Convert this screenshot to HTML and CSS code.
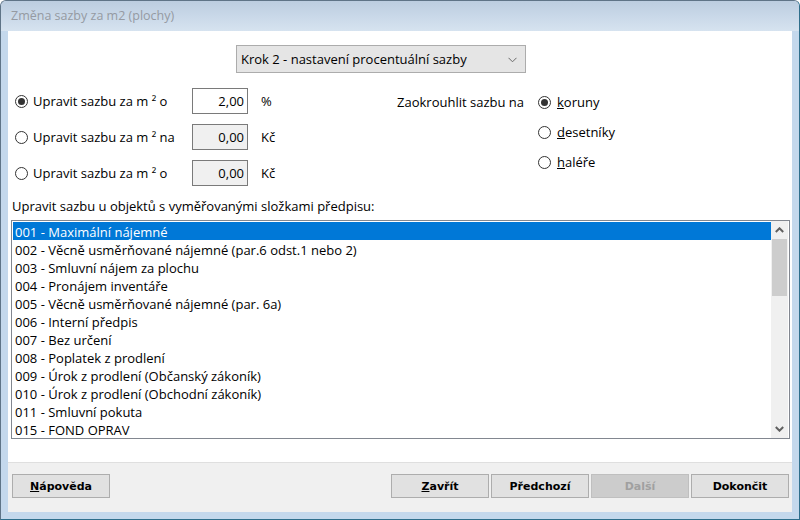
FILE: index.html
```html
<!DOCTYPE html>
<html lang="cs">
<head>
<meta charset="utf-8">
<title>Změna sazby za m2 (plochy)</title>
<link rel="stylesheet" href="styles.css">
</head>
<body>
<div class="window">
  <div class="titlebar"><span class="title">Změna sazby za m2 (plochy)</span></div>
  <div class="client">
    <div class="content">
      <div class="step-row">
        <div class="select">
          <span>Krok 2 - nastavení procentuální sazby</span>
          <svg class="chev" width="9" height="6" viewBox="0 0 9 6"><path d="M0.5 0.8 L4.5 4.8 L8.5 0.8" fill="none" stroke="#6a6a6a" stroke-width="1"/></svg>
        </div>
      </div>
      <div class="options">
        <div class="rates">
          <div class="rate-row">
            <span class="radio checked"></span>
            <span class="rate-label">Upravit sazbu za m ² o</span>
            <span class="field">2,00</span>
            <span class="unit">%</span>
          </div>
          <div class="rate-row">
            <span class="radio"></span>
            <span class="rate-label">Upravit sazbu za m ² na</span>
            <span class="field disabled">0,00</span>
            <span class="unit">Kč</span>
          </div>
          <div class="rate-row">
            <span class="radio"></span>
            <span class="rate-label">Upravit sazbu za m ² o</span>
            <span class="field disabled">0,00</span>
            <span class="unit">Kč</span>
          </div>
        </div>
        <div class="rounding">
          <span class="rounding-label">Zaokrouhlit sazbu na</span>
          <div class="rounding-list">
            <div class="opt"><span class="radio checked"></span><span><u>k</u>oruny</span></div>
            <div class="opt"><span class="radio"></span><span><u>d</u>esetníky</span></div>
            <div class="opt"><span class="radio"></span><span><u>h</u>aléře</span></div>
          </div>
        </div>
      </div>
      <div class="list-label">Upravit sazbu u objektů s vyměřovanými složkami předpisu:</div>
      <div class="listbox">
        <ul class="items">
          <li class="selected">001 - Maximální nájemné</li>
          <li>002 - Věcně usměrňované nájemné (par.6 odst.1 nebo 2)</li>
          <li>003 - Smluvní nájem za plochu</li>
          <li>004 - Pronájem inventáře</li>
          <li>005 - Věcně usměrňované nájemné (par. 6a)</li>
          <li>006 - Interní předpis</li>
          <li>007 - Bez určení</li>
          <li>008 - Poplatek z prodlení</li>
          <li>009 - Úrok z prodlení (Občanský zákoník)</li>
          <li>010 - Úrok z prodlení (Obchodní zákoník)</li>
          <li>011 - Smluvní pokuta</li>
          <li>015 - FOND OPRAV</li>
        </ul>
        <div class="scrollbar">
          <div class="sb-btn"><svg width="9" height="6" viewBox="0 0 9 6"><path d="M0.8 5 L4.5 1.3 L8.2 5" fill="none" stroke="#606060" stroke-width="2"/></svg></div>
          <div class="sb-track"><div class="sb-thumb"></div></div>
          <div class="sb-btn"><svg width="9" height="6" viewBox="0 0 9 6"><path d="M0.8 1 L4.5 4.7 L8.2 1" fill="none" stroke="#606060" stroke-width="2"/></svg></div>
        </div>
      </div>
    </div>
    <div class="footer">
      <button class="btn"><u>N</u>ápověda</button>
      <div class="spacer"></div>
      <div class="btn-group">
        <button class="btn"><u>Z</u>avřít</button>
        <button class="btn">Předchozí</button>
        <button class="btn disabled">Další</button>
        <button class="btn">Dokončit</button>
      </div>
    </div>
  </div>
</div>
</body>
</html>
```
FILE: styles.css
```css
html, body {
  margin: 0;
  padding: 0;
  background: #ffffff;
}

.window {
  box-sizing: border-box;
  width: 800px;
  height: 520px;
  display: flex;
  flex-direction: column;
  border: 1px solid #5f7487;
  border-right-color: #2f6f8c;
  border-bottom-color: #2f6f8c;
  border-radius: 6px 6px 0 0;
  background: #c4d8ec;
  padding: 0 7px 7px 7px;
  font-family: "Open Sans", "Liberation Sans", sans-serif;
  font-size: 13px;
  color: #000000;
}

.titlebar {
  height: 30px;
  margin: 0 -7px;
  padding-left: 10px;
  display: flex;
  align-items: center;
  background: linear-gradient(#bccde0, #d6e3f0);
  border-radius: 5px 5px 0 0;
}

.title {
  font-size: 12.5px;
  color: #959aa2;
  margin-top: -2px;
}

.client {
  flex: 1;
  display: flex;
  flex-direction: column;
  background: #ffffff;
}

.content {
  flex: 1;
  padding: 14px 2px 0 3px;
}

.step-row {
  display: flex;
  padding-left: 225px;
}

.select {
  box-sizing: border-box;
  width: 290px;
  height: 28px;
  display: flex;
  align-items: center;
  justify-content: space-between;
  padding: 0 8px 0 4px;
  background: #e5e5e5;
  border: 1px solid #acacac;
}

.chev {
  margin-top: 1px;
}

.options {
  display: flex;
  align-items: flex-start;
  margin-top: 10px;
}

.rates {
  width: 386px;
}

.rate-row {
  height: 36px;
  display: flex;
  align-items: center;
  padding-left: 4px;
}

.radio {
  box-sizing: border-box;
  width: 13px;
  height: 13px;
  border: 1px solid #333333;
  border-radius: 50%;
  background: #ffffff;
  display: flex;
  align-items: center;
  justify-content: center;
  flex: none;
}

.radio.checked::after {
  content: "";
  width: 7px;
  height: 7px;
  border-radius: 50%;
  background: #333333;
}

.rate-label {
  width: 159px;
  margin-left: 5px;
}

.field {
  box-sizing: border-box;
  width: 56px;
  height: 26px;
  border: 1px solid #7a7a7a;
  background: #ffffff;
  display: flex;
  align-items: center;
  justify-content: flex-end;
  padding-right: 3px;
}

.field.disabled {
  background: #f0f0f0;
}

.unit {
  margin-left: 13px;
}

.rounding {
  display: flex;
  align-items: flex-start;
  margin-top: 4px;
}

.rounding-label {
  line-height: 30px;
  width: 141px;
}

.rounding-list {
  display: flex;
  flex-direction: column;
}

.opt {
  height: 30px;
  display: flex;
  align-items: center;
  gap: 6px;
}

.list-label {
  margin-top: 6px;
  line-height: 18px;
  padding-left: 1px;
}

.listbox {
  box-sizing: border-box;
  height: 219px;
  margin-top: 5px;
  border: 1px solid #828790;
  display: flex;
  padding: 1px 0 0 1px;
}

.items {
  flex: 1;
  list-style: none;
  margin: 0;
  padding: 0;
}

.items li {
  box-sizing: border-box;
  height: 18px;
  line-height: 18px;
  padding: 1px 0 0 2px;
  white-space: nowrap;
  overflow: hidden;
}

.items li.selected {
  background: #0078d7;
  color: #ffffff;
}

.scrollbar {
  width: 17px;
  margin-top: -1px;
  margin-right: 1px;
  background: #f0f0f0;
  display: flex;
  flex-direction: column;
}

.sb-btn {
  height: 18px;
  display: flex;
  align-items: center;
  justify-content: center;
}

.sb-track {
  flex: 1;
  padding: 0 1px;
}

.sb-thumb {
  height: 57px;
  background: #cdcdcd;
}

.footer {
  height: 50px;
  box-sizing: border-box;
  background: #f0f0f0;
  border-top: 1px solid #dfdfdf;
  display: flex;
  align-items: center;
  padding: 0 3px 3px 4px;
}

.spacer {
  flex: 1;
}

.btn-group {
  display: flex;
  gap: 2px;
}

.btn {
  box-sizing: border-box;
  width: 98px;
  height: 24px;
  margin: 0;
  padding: 0;
  background: #e1e1e1;
  border: 1px solid #adadad;
  font-family: "DejaVu Sans", "Liberation Sans", sans-serif;
  font-weight: bold;
  font-size: 11px;
  color: #000000;
}

.btn.disabled {
  background: #cccccc;
  border-color: #bfbfbf;
  color: #a0a0a0;
}
```
